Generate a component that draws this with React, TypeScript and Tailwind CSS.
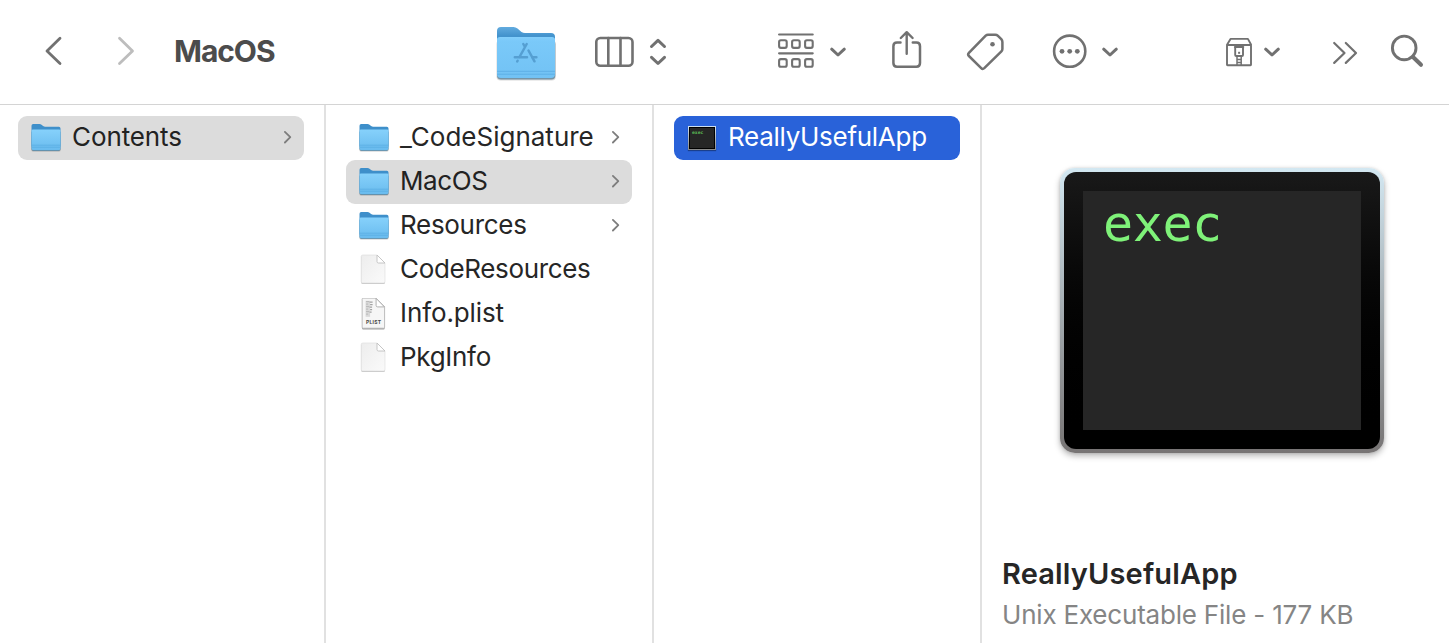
import type { ReactNode } from "react";

const INK = "#717171";

type ToolProps = { x: number; w: number; className: string; label: string; children: ReactNode };

function Tool({ x, w, className, label, children }: ToolProps) {
  return (
    <button type="button" aria-label={label} className={`h-[104px] shrink-0 ${className}`}>
      <svg
        width={w}
        height={104}
        viewBox={`${x} 0 ${w} 104`}
        fill="none"
        stroke={INK}
        strokeWidth={2.6}
        strokeLinecap="round"
        strokeLinejoin="round"
        className="block"
      >
        {children}
      </svg>
    </button>
  );
}

function DownCaret({ cx }: { cx: number }) {
  return <path d={`M${cx - 6.3} 49.2L${cx} 55L${cx + 6.3} 49.2`} strokeWidth={3} />;
}

function Toolbar() {
  return (
    <header className="flex h-[104px] shrink-0 items-start">
      <Tool x={36} w={36} className="ml-9" label="Back">
        <path d="M60 38.3L47 51L60 63.5" strokeWidth={2.8} />
      </Tool>
      <Tool x={108} w={36} className="ml-9" label="Forward">
        <path d="M119.5 38.3L132.5 51L119.5 63.5" stroke="#bdbdbd" strokeWidth={2.8} />
      </Tool>
      <h1 className="ml-[30px] flex h-[102px] w-[316px] items-center text-[30px] font-bold tracking-[-1.05px] text-[#4c4c4c]">
        MacOS
      </h1>
      <Tool x={490} w={72} className="" label="Proxy folder">
        <defs>
          <linearGradient id="tb-back" x1="0" y1="0" x2="0" y2="1">
            <stop offset="0" stopColor="#62abdf" />
            <stop offset="0.2" stopColor="#4393cd" />
            <stop offset="1" stopColor="#4393cd" />
          </linearGradient>
          <linearGradient id="tb-front" x1="0" y1="0" x2="0" y2="1">
            <stop offset="0" stopColor="#83cffb" />
            <stop offset="0.1" stopColor="#7ac9f9" />
            <stop offset="1" stopColor="#72c2f4" />
          </linearGradient>
        </defs>
        <g stroke="none">
          <rect x="496.5" y="40" width="59.300" height="40.600" rx="4" fill="#000" opacity="0.15" />
          <rect x="497" y="40" width="58.3" height="39.4" rx="4" fill="#4b7690" opacity="0.7" />
          <path d="M497 31q0-4 4-4h12.5q2.2 0 4 1.500l4 3.400q1.500 1.100 3.500 1.100h26q4 0 4 4v34h-58z" fill="url(#tb-back)" />
          <path d="M497 39.500q0-2.500 3-2.500h52q3 0 3 2.500v34.500q0 4-4 4h-50q-4 0-4-4z" fill="url(#tb-front)" />
          <path d="M497.500 71.300h57M497.500 74.200h57" stroke="#4aa1da" strokeWidth="0.9" opacity="0.6" />
        </g>
        <g stroke="#559fd2" strokeWidth="2.500">
          <path d="M526.700 44L519.500 57M523.300 44L525 47M528.500 50.500L534.500 61.300M517.600 60.700L517.200 61.500" />
          <path d="M514.800 57.300H527M532.500 57.300H536.400" />
        </g>
      </Tool>
      <Tool x={588} w={88} className="ml-[26px]" label="Column view">
        <rect x="596.3" y="38" width="36.200" height="27.700" rx="4" />
        <path d="M608.300 38V65.500M620.500 38V65.500" />
        <path d="M651.500 46.500L658 40.300L664.500 46.500M651.500 57.300L658 63.500L664.500 57.300" strokeWidth={3} />
      </Tool>
      <Tool x={770} w={80} className="ml-[94px]" label="Group items">
        <path d="M779.100 34.500H812.700M779.100 53.300H812.700" strokeWidth={2.2} />
        <g strokeWidth={2.1}>
          {[39.3, 58.1].map((y) =>
            [778, 791, 804].map((x) => (
              <rect key={`${x}-${y}`} x={x + 1.1} y={y + 1} width={7.6} height={7.600} rx={1.8} />
            )),
          )}
        </g>
        <DownCaret cx={838} />
      </Tool>
      <Tool x={884} w={44} className="ml-[34px]" label="Share">
        <path d="M900.500 42.600H897q-3.600 0-3.600 3.600V63q0 3.700 3.600 3.700H916.400q3.600 0 3.600-3.700V46.200q0-3.600-3.600-3.600H912.800" strokeWidth={2.5} />
        <path d="M906.700 53.800V33M900.800 38L906.700 32.200L912.600 38" strokeWidth={2.4} />
      </Tool>
      <Tool x={960} w={50} className="ml-8" label="Tags">
        <path d="M985.700 35.600Q986.700 34.700 988 34.700H995.300Q996.700 34.700 997.700 35.700L1001.300 39.200Q1002.400 40.400 1002.400 42V49Q1002.400 50.400 1001.400 51.400L984.300 68.200Q982.700 69.700 981.200 68.200L968.900 56Q967.400 54.500 968.900 52.900Z" strokeWidth={2.5} />
        <circle cx="992.500" cy="44.300" r="2.300" fill={INK} stroke="none" />
      </Tool>
      <Tool x={1046} w={78} className="ml-9" label="More actions">
        <circle cx="1069.700" cy="51.200" r="15.600" />
        <g fill={INK} stroke="none">
          <circle cx="1062" cy="51.300" r="2.400" />
          <circle cx="1069.700" cy="51.300" r="2.400" />
          <circle cx="1077.300" cy="51.300" r="2.400" />
        </g>
        <DownCaret cx={1110} />
      </Tool>
      <Tool x={1220} w={64} className="ml-24" label="Archive">
        <g strokeWidth={1.9}>
          <rect x="1227" y="45" width="24" height="20.200" rx="0.5" />
          <path d="M1227.200 44.500L1230.500 38.900H1247.900L1251 44.500" />
          <path d="M1235 47H1243.200" strokeWidth={2.200} />
          <path d="M1235.200 47.500V55Q1235.200 56 1236.200 56H1242Q1243 56 1243 55V47.500" />
          <path d="M1237 56V65M1241.200 56V65M1237 59.500H1241.200M1237 62.500H1241.200" strokeWidth={1.500} />
        </g>
        <rect x="1238.100" y="51.800" width="2" height="2" fill={INK} stroke="none" />
        <DownCaret cx={1272} />
      </Tool>
      <Tool x={1326} w={36} className="ml-[42px]" label="Show more">
        <path d="M1334.200 43L1344.500 53L1334.200 62.900M1345.800 43L1356 53L1345.800 62.900" strokeWidth={2.200} />
      </Tool>
      <Tool x={1386} w={42} className="ml-6" label="Search">
        <circle cx="1404.2" cy="47.900" r="11.800" strokeWidth={2.900} />
        <path d="M1413 57L1421 64.800" strokeWidth={4} />
      </Tool>
    </header>
  );
}

function FolderIcon() {
  return (
    <svg width="32" height="32" viewBox="0 -0.6 32 32" className="block">
      <defs>
        <linearGradient id="sm-front" x1="0" y1="0" x2="0" y2="1">
          <stop offset="0" stopColor="#86d1fb" />
          <stop offset="1" stopColor="#69bbee" />
        </linearGradient>
      </defs>
      <rect x="1.200" y="8" width="29.600" height="21.200" rx="2" fill="#000" opacity="0.15" />
      <rect x="1.500" y="8" width="29" height="20.500" rx="2" fill="#44718c" opacity="0.75" />
      <path d="M1.500 3.200q0-1.700 1.700-1.700h6.300q1.200 0 2 .7l1.600 1.300q.9.700 2 .7h13.700q1.700 0 1.700 1.700v18h-29z" fill="#3e8fca" />
      <path d="M1.500 8.300q0-1.300 1.500-1.300h26q1.500 0 1.500 1.300v17.400q0 2-2 2h-25q-2 0-2-2z" fill="url(#sm-front)" />
      <path d="M2 22.600h28M2 24.600h28" stroke="#459dd6" strokeWidth="0.700" opacity="0.600" />
    </svg>
  );
}

function DocIcon() {
  return (
    <svg width="32" height="32" viewBox="-0.7 0.3 32 32" className="block">
      <defs>
        <linearGradient id="doc" x1="0" y1="0" x2="1" y2="1">
          <stop offset="0" stopColor="#ededed" />
          <stop offset="1" stopColor="#fafafa" />
        </linearGradient>
      </defs>
      <path d="M4 1.500h14l8.300 8v18.500q0 1.500-1.500 1.500h-20.800q-1.500 0-1.500-1.500v-25q0-1.500 1.500-1.500z" fill="#000" opacity="0.220" transform="translate(0 0.800)" />
      <path d="M4 1.300h14l8.300 8v18.500q0 1.500-1.500 1.500h-20.800q-1.500 0-1.500-1.500v-25q0-1.500 1.500-1.500z" fill="url(#doc)" stroke="#dcdcdc" strokeWidth="0.600" />
      <path d="M18.300 1.300v6.500q0 1.500 1.500 1.500h6.500z" fill="#fff" stroke="#c0c0c0" strokeWidth="0.900" />
    </svg>
  );
}

function PlistIcon() {
  return (
    <svg width="32" height="32" viewBox="-0.6 0.4 32 32" className="block">
      <path d="M4.500 1h13l8.500 8.500v20.500q0 1-1 1h-20.500q-1 0-1-1v-28q0-1 1-1z" fill="#000" opacity="0.380" transform="translate(0 0.800)" />
      <path d="M4.500 .6h13l8.500 8.500v20.500q0 1-1 1h-20.500q-1 0-1-1v-28q0-1 1-1z" fill="#f6f6f6" stroke="#b4b4b4" strokeWidth="0.800" />
      <path d="M7 3.200h4.500v16h-4.500z" fill="#d9d9d9" />
      <path d="M7.500 4h3M7.500 6.500h2M7.500 9h3M7.500 11.500h2M7.500 14h3M7.500 16.500h2" stroke="#b8b8b8" strokeWidth="1" />
      <path d="M11 4.500h3M11.500 7h2.500M11 9.500h2.500M11.500 12h2M11 14.500h2" stroke="#a2a2a2" strokeWidth="1.200" />
      <path d="M17.500 .8v7q0 1.500 1.500 1.500h6.800z" fill="#fff" stroke="#a8a8a8" strokeWidth="0.900" />
      <text x="15.100" y="26.800" textAnchor="middle" fontSize="5" fontWeight="700" letterSpacing="0.300" fill="#484848" fontFamily="Inter, sans-serif">
        PLIST
      </text>
    </svg>
  );
}

function ExecIcon() {
  return (
    <div className="ml-[2px] h-6 w-7 bg-linear-to-b from-[#cfe1f2] to-[#8b8b8b] p-px shadow-[0_1px_1px_rgba(0,0,0,0.35)]">
      <div className="h-full border border-black bg-[#262626] pt-[2px] pl-[2px] font-['DejaVu_Sans_Mono',monospace] text-[4.7px] leading-[5px] font-bold text-[#5cbb55]">
        exec
      </div>
    </div>
  );
}

type Kind = "folder" | "doc" | "plist" | "exec";
type Entry = { name: string; kind: Kind; state?: "path" | "active"; tracking: string };

const icons: Record<Kind, () => ReactNode> = {
  folder: FolderIcon,
  doc: DocIcon,
  plist: PlistIcon,
  exec: ExecIcon,
};

const rowTone = {
  none: "text-[#262626]",
  path: "bg-[#dcdcdc] text-[#222222]",
  active: "bg-[#2962d9] text-white",
};

function Row({ name, kind, state, tracking }: Entry) {
  const Icon = icons[kind];
  return (
    <li className={`flex h-11 items-center rounded-[9px] pr-[11px] pl-3 ${rowTone[state ?? "none"]}`}>
      <span className="flex h-8 w-8 shrink-0 items-center">
        <Icon />
      </span>
      <span className={`ml-[10px] flex-1 pb-[2px] text-[26px] leading-[40px] whitespace-nowrap ${tracking}`}>{name}</span>
      {kind === "folder" && (
        <svg width="12" height="16" viewBox="0 0 12 16" fill="none" stroke="#7d7d7d" strokeWidth="1.800" strokeLinecap="round" strokeLinejoin="round" className="-mt-[2px] shrink-0">
          <path d="M3.900 2.900L9.300 8.200L3.900 13.500" />
        </svg>
      )}
    </li>
  );
}

function Column({ entries, className }: { entries: Entry[]; className: string }) {
  return (
    <ul className={`shrink-0 border-r-2 border-[#e1e1e1] pt-[11px] pr-5 ${className}`}>
      {entries.map((entry) => (
        <Row key={entry.name} {...entry} />
      ))}
    </ul>
  );
}

const first: Entry[] = [{ name: "Contents", kind: "folder", state: "path", tracking: "tracking-[-0.1px]" }];

const second: Entry[] = [
  { name: "_CodeSignature", kind: "folder", tracking: "tracking-[0px]" },
  { name: "MacOS", kind: "folder", state: "path", tracking: "tracking-[-0.4px]" },
  { name: "Resources", kind: "folder", tracking: "tracking-[-0.3px]" },
  { name: "CodeResources", kind: "doc", tracking: "tracking-[-0.35px]" },
  { name: "Info.plist", kind: "plist", tracking: "tracking-[-0.1px]" },
  { name: "PkgInfo", kind: "doc", tracking: "tracking-[-0.3px]" },
];

const third: Entry[] = [{ name: "ReallyUsefulApp", kind: "exec", state: "active", tracking: "tracking-[-0.28px]" }];

function Preview() {
  return (
    <section className="flex min-w-0 flex-1 flex-col pt-[63px] pl-[20px]">
      <div className="ml-[58px] h-[285px] w-[324px] rounded-[15px] bg-linear-to-b from-[#d3e8f2] to-[#777474] px-[4px] pt-[4px] pb-[4px] shadow-[0_3px_6px_rgba(0,0,0,0.28),0_0_3px_rgba(0,0,0,0.12)]">
        <div className="h-[277px] rounded-[12px] bg-linear-to-b from-[#191919] to-black px-[19px] pt-[19px]">
          <div className="h-[239px] bg-[#262626] pt-[4px] pl-[20px] font-['DejaVu_Sans_Mono',monospace] text-[50px] leading-[58px] tracking-[-0.4px] text-[#7ff279]">
            exec
          </div>
        </div>
      </div>
      <h2 className="mt-[100px] text-[29px] leading-[42px] font-semibold tracking-[0.15px] whitespace-nowrap text-[#262626]">ReallyUsefulApp</h2>
      <p className="text-[26px] leading-[40px] tracking-[-0.2px] whitespace-nowrap text-[#858585]">Unix Executable File - 177 KB</p>
    </section>
  );
}

export default function App() {
  return (
    <div className="flex h-[643px] w-[1449px] flex-col overflow-hidden bg-white font-['Inter',sans-serif]">
      <Toolbar />
      <main className="flex min-h-0 flex-1 border-t border-[#d4d4d4]">
        <Column entries={first} className="w-[326px] pl-[18px]" />
        <Column entries={second} className="w-[328px] pl-5" />
        <Column entries={third} className="w-[328px] pl-5" />
        <Preview />
      </main>
    </div>
  );
}
